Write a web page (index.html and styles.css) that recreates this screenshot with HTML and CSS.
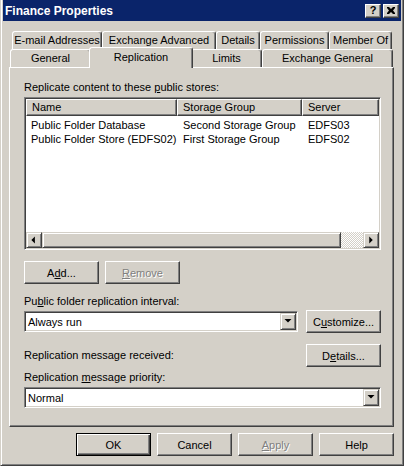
FILE: index.html
```html
<!DOCTYPE html>
<html lang="en">
<head>
    <meta charset="UTF-8">
    <title>Finance Properties</title>
    <link rel="stylesheet" href="styles.css">
</head>
<body>

<div class="window">
    <div class="titlebar">
        <span class="title">Finance Properties</span>
        <div class="caption-buttons">
            <span class="caption-btn">?</span>
            <span class="caption-btn">
                <svg width="8" height="7" viewBox="0 0 8 7"><path d="M0 0h2l2 2 2-2h2v1L6 3.5 8 6v1H6L4 5 2 7H0V6l2-2.5L0 1z" fill="#000"/></svg>
            </span>
        </div>
    </div>

    <div class="dialog">
        <!-- Two rows of property tabs -->
        <div class="tabs">
            <div class="tab-row back">
                <div class="tab tab-email">E-mail Addresses</div>
                <div class="tab tab-advanced">Exchange Advanced</div>
                <div class="tab tab-details">Details</div>
                <div class="tab tab-permissions">Permissions</div>
                <div class="tab tab-member">Member Of</div>
            </div>
            <div class="tab-row front">
                <div class="tab tab-general">General</div>
                <div class="tab tab-replication selected">Replication</div>
                <div class="tab tab-limits">Limits</div>
                <div class="tab tab-exgeneral">Exchange General</div>
            </div>
        </div>

        <div class="panel">
            <div class="label">Replicate content to these <u>p</u>ublic stores:</div>

            <div class="listview">
                <div class="lv-header">
                    <div class="lv-col col-name">Name</div>
                    <div class="lv-col col-group">Storage Group</div>
                    <div class="lv-col col-server">Server</div>
                </div>
                <div class="lv-body">
                    <div class="lv-row">
                        <span class="col-name">Public Folder Database</span>
                        <span class="col-group">Second Storage Group</span>
                        <span class="col-server">EDFS03</span>
                    </div>
                    <div class="lv-row">
                        <span class="col-name">Public Folder Store (EDFS02)</span>
                        <span class="col-group">First Storage Group</span>
                        <span class="col-server">EDFS02</span>
                    </div>
                </div>
                <div class="hscroll">
                    <div class="sb-btn">
                        <svg width="16" height="14" viewBox="0 0 16 14"><path d="M5 7l4-4v8z" fill="#000"/></svg>
                    </div>
                    <div class="sb-thumb"></div>
                    <div class="sb-track"></div>
                    <div class="sb-btn">
                        <svg width="16" height="14" viewBox="0 0 16 14"><path d="M6 3l4 4-4 4z" fill="#000"/></svg>
                    </div>
                </div>
            </div>

            <div class="button-row">
                <button class="btn">A<u>d</u>d...</button>
                <button class="btn disabled"><u>R</u>emove</button>
            </div>

            <div class="label spaced">Pu<u>b</u>lic folder replication interval:</div>
            <div class="field-row">
                <div class="combo">
                    <span class="combo-text">Always run</span>
                    <span class="combo-btn">
                        <svg width="14" height="13" viewBox="0 0 14 13"><path d="M3.5 5h7L7 8.5z" fill="#000"/></svg>
                    </span>
                </div>
                <button class="btn">C<u>u</u>stomize...</button>
            </div>

            <div class="field-row received">
                <div class="label">Replication message received:</div>
                <button class="btn">D<u>e</u>tails...</button>
            </div>

            <div class="label priority">Replication <u>m</u>essage priority:</div>
            <div class="combo wide">
                <span class="combo-text">Normal</span>
                <span class="combo-btn">
                    <svg width="14" height="13" viewBox="0 0 14 13"><path d="M3.5 5h7L7 8.5z" fill="#000"/></svg>
                </span>
            </div>
        </div>

        <div class="footer">
            <button class="btn default">OK</button>
            <button class="btn">Cancel</button>
            <button class="btn disabled"><u>A</u>pply</button>
            <button class="btn">Help</button>
        </div>
    </div>
</div>

</body>
</html>
```

FILE: styles.css
```css
/* Classic Windows dialog */
body {
    margin: 0;
    padding: 0;
    background: #d4d0c8;
    font-family: "Liberation Sans", Arial, sans-serif;
    font-size: 11px;
    color: #000;
}

.window {
    width: 404px;
    height: 466px;
    box-sizing: border-box;
    background: #d4d0c8;
    border-left: 1px solid #d4d0c8;
    border-right: 1px solid #404040;
    border-bottom: 1px solid #404040;
    box-shadow: inset 1px 0 #fff, inset -1px -1px #808080;
    padding: 0 1px 1px 1px;
}

/* Title bar */
.titlebar {
    height: 21px;
    margin: 0 1px;
    background: #0a246a;
    display: flex;
    align-items: center;
    justify-content: space-between;
    padding: 0 2px 0 2px;
}

.title {
    color: #fff;
    font-weight: bold;
    font-size: 12px;
}

.caption-buttons {
    display: flex;
    gap: 2px;
}

.caption-btn {
    width: 16px;
    height: 14px;
    box-sizing: border-box;
    background: #d4d0c8;
    border: 1px solid;
    border-color: #fff #404040 #404040 #fff;
    box-shadow: inset -1px -1px #808080;
    display: flex;
    align-items: center;
    justify-content: center;
    font-weight: bold;
    font-size: 11px;
    line-height: 1;
}

/* Dialog body */
.dialog {
    padding: 10px 7px 0 7px;
}

.tab-row {
    display: flex;
    height: 18px;
}

.tab-row.back {
    margin: 0 2px 0 3px;
}

.tab-row.front {
    margin: 0 1px 0 1px;
}

.tab {
    height: 18px;
    box-sizing: border-box;
    border: 1px solid;
    border-bottom: 0;
    border-color: #fff #404040 transparent #fff;
    border-radius: 3px 3px 0 0;
    box-shadow: inset -1px 0 #808080;
    background: #d4d0c8;
    display: flex;
    align-items: center;
    justify-content: center;
    padding-bottom: 1px;
}

.tab.selected {
    position: relative;
    z-index: 2;
    height: 21px;
    margin: -2px -2px -1px -2px;
    padding-bottom: 3px;
}

.tab-email { width: 90px; }
.tab-advanced { width: 114px; }
.tab-details { width: 44px; }
.tab-permissions { width: 69px; }
.tab-member { width: 63px; }

.tab-general { width: 81px; }
.tab-replication { width: 104px; }
.tab-limits { width: 71px; }
.tab-exgeneral { width: 131px; }

/* Tab page */
.panel {
    width: 385px;
    height: 360px;
    box-sizing: border-box;
    border: 1px solid;
    border-color: #fff #404040 #404040 #fff;
    box-shadow: inset -1px -1px #808080;
    padding: 13px 12px 0 14px;
    display: flex;
    flex-direction: column;
}

.label {
    height: 13px;
    line-height: 13px;
    white-space: nowrap;
}

.label.spaced {
    margin-top: 11px;
}

.label.priority {
    margin-top: 4px;
}

/* List view */
.listview {
    margin-top: 3px;
    height: 153px;
    box-sizing: border-box;
    border: 1px solid;
    border-color: #808080 #fff #fff #808080;
    box-shadow: inset 1px 1px #404040, inset -1px -1px #d4d0c8;
    background: #fff;
    padding: 1px;
    display: flex;
    flex-direction: column;
}

.lv-header {
    display: flex;
    height: 17px;
}

.lv-col {
    box-sizing: border-box;
    height: 17px;
    background: #d4d0c8;
    border: 1px solid;
    border-color: #fff #404040 #404040 #fff;
    box-shadow: inset -1px -1px #808080;
    padding-left: 5px;
    line-height: 14px;
}

.col-name { width: 151px; }
.col-group { width: 125px; }
.col-server { flex: 1; }

.lv-body {
    flex: 1;
    padding-top: 2px;
}

.lv-row {
    display: flex;
    height: 14px;
    line-height: 14px;
    white-space: nowrap;
}

.lv-row span {
    box-sizing: border-box;
    padding-left: 5px;
}

.lv-row .col-group,
.lv-row .col-server {
    padding-left: 6px;
}

/* Horizontal scrollbar */
.hscroll {
    display: flex;
    height: 16px;
}

.sb-btn,
.sb-thumb {
    box-sizing: border-box;
    height: 16px;
    background: #d4d0c8;
    border: 1px solid;
    border-color: #d4d0c8 #404040 #404040 #d4d0c8;
    box-shadow: inset 1px 1px #fff, inset -1px -1px #808080;
}

.sb-btn {
    width: 16px;
    display: flex;
}

.sb-thumb {
    width: 299px;
}

.sb-track {
    flex: 1;
    background: repeating-conic-gradient(#fff 0 25%, #d4d0c8 0 50%) 0 0 / 2px 2px;
}

/* Buttons */
.btn {
    width: 75px;
    height: 23px;
    box-sizing: border-box;
    margin: 0;
    padding: 0;
    font: inherit;
    color: #000;
    background: #d4d0c8;
    border: 1px solid;
    border-color: #fff #404040 #404040 #fff;
    box-shadow: inset -1px -1px #808080;
}

.btn.disabled {
    color: #808080;
    text-shadow: 1px 1px #fff;
}

.btn.default {
    border-color: #000;
    box-shadow: inset 1px 1px #fff, inset -1px -1px #404040, inset -2px -2px #808080;
}

.button-row {
    display: flex;
    gap: 6px;
    margin-top: 11px;
}

.field-row {
    display: flex;
    align-items: center;
    justify-content: space-between;
    margin-top: 2px;
}

.field-row.received {
    margin-top: 11px;
}

/* Combo boxes */
.combo {
    height: 21px;
    width: 274px;
    box-sizing: border-box;
    border: 1px solid;
    border-color: #808080 #fff #fff #808080;
    box-shadow: inset 1px 1px #404040, inset -1px -1px #d4d0c8;
    background: #fff;
    padding: 2px;
    display: flex;
    align-items: center;
}

.combo.wide {
    width: 357px;
    margin-top: 3px;
}

.combo-text {
    flex: 1;
    padding-left: 1px;
}

.combo-btn {
    width: 16px;
    height: 17px;
    box-sizing: border-box;
    background: #d4d0c8;
    border: 1px solid;
    border-color: #d4d0c8 #404040 #404040 #d4d0c8;
    box-shadow: inset 1px 1px #fff, inset -1px -1px #808080;
    display: flex;
    margin-right: -1px;
}

/* OK / Cancel row */
.footer {
    display: flex;
    justify-content: flex-end;
    gap: 6px;
    width: 385px;
    margin-top: 6px;
}
```
